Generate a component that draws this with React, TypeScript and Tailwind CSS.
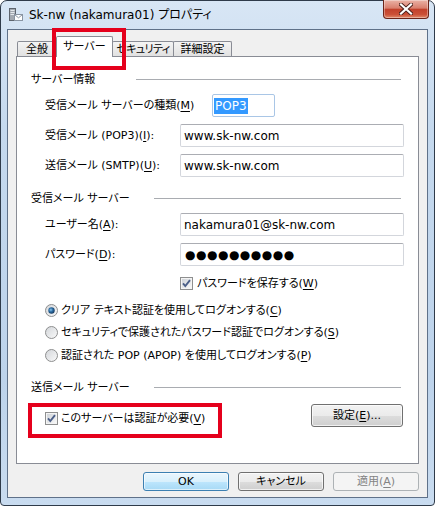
import React from 'react';

const Key = ({ children }: { children: string }) => (
  <span className="underline underline-offset-[2px] decoration-1">{children}</span>
);

const TitleIcon = () => (
  <svg width="16" height="16" viewBox="0 0 16 16" className="ml-[7px] shrink-0">
    <rect x="1.5" y="1.5" width="6" height="12" fill="#a3a9b1" stroke="#5d646d" />
    <rect x="2.5" y="3" width="4" height="1" fill="#e4e8ec" />
    <rect x="2.5" y="5" width="4" height="1" fill="#e4e8ec" />
    <rect x="2.5" y="7" width="4" height="1" fill="#e4e8ec" />
    <rect x="6.5" y="7.5" width="8" height="6" fill="#ffffff" stroke="#8a95a3" />
    <path d="M6.8 7.8 L10.5 10.8 L14.2 7.8" stroke="#8a95a3" fill="none" />
  </svg>
);

const CloseButton = () => (
  <div className="ml-auto mr-[5px] -mt-px self-start w-[46px] h-[19px] rounded-b-[4px] border border-t-0 border-[#6b2419] bg-[linear-gradient(180deg,#eab2a6,#d97f6e_45%,#c2412c_52%,#cb5037_80%,#e0896a)] shadow-[inset_0_0_0_1px_rgba(255,255,255,0.35)] flex items-center justify-center">
    <svg width="14" height="12" viewBox="0 0 14 12">
      <path d="M2 1.5 L12 10.5 M12 1.5 L2 10.5" stroke="#4a1f1a" strokeWidth="4" strokeLinecap="square" />
      <path d="M2 1.5 L12 10.5 M12 1.5 L2 10.5" stroke="#ffffff" strokeWidth="2.2" strokeLinecap="square" />
    </svg>
  </div>
);

const CheckBox = ({ checked }: { checked?: boolean }) => (
  <svg width="13" height="13" viewBox="0 0 13 13" className="shrink-0">
    <defs>
      <linearGradient id="cbFill" x1="0" y1="0" x2="1" y2="1">
        <stop offset="0" stopColor="#cfd3d8" />
        <stop offset="1" stopColor="#f8f8f8" />
      </linearGradient>
    </defs>
    <rect x="0.5" y="0.5" width="12" height="12" fill="#f4f4f4" stroke="#8e8f8f" />
    <rect x="2" y="2" width="9" height="9" fill="url(#cbFill)" />
    {checked && (
      <path d="M3 6.3 L5.3 9 L10 3.2" stroke="#4b5f88" strokeWidth="1.9" fill="none" />
    )}
  </svg>
);

const Radio = ({ checked }: { checked?: boolean }) => (
  <svg width="13" height="13" viewBox="0 0 13 13" className="shrink-0">
    <defs>
      <linearGradient id="rbFill" x1="0" y1="0" x2="1" y2="1">
        <stop offset="0" stopColor="#d2d5d9" />
        <stop offset="1" stopColor="#fafafa" />
      </linearGradient>
      <radialGradient id="rbDot" cx="0.4" cy="0.4" r="0.6">
        <stop offset="0" stopColor="#8cc7ee" />
        <stop offset="0.5" stopColor="#2b6ca3" />
        <stop offset="1" stopColor="#173d63" />
      </radialGradient>
    </defs>
    <circle cx="6.5" cy="6.5" r="6" fill="url(#rbFill)" stroke="#8e8f8f" />
    {checked && <circle cx="6.5" cy="6.5" r="3.2" fill="url(#rbDot)" />}
  </svg>
);

const TextBox = ({ children }: { children: React.ReactNode }) => (
  <div className="w-[224px] h-[23px] rounded-[2px] border border-[#d3d6dc] border-t-[#abadb3] bg-white pl-[3px] flex items-center text-[12px]">
    {children}
  </div>
);

const SectionTitle = ({ label, width }: { label: string; width: string }) => (
  <div className="flex items-center h-[22px] pl-[14px] pr-[17px]">
    <span className={width}>{label}</span>
    <div className="flex-1 h-px bg-[#a9acb1]" />
  </div>
);

const Field = ({ label, children }: { label: React.ReactNode; children: React.ReactNode }) => (
  <div className="flex items-center h-[23px] pl-[28px]">
    <span className="w-[135px]">{label}</span>
    {children}
  </div>
);

const Tab = ({ label, active, tight }: { label: string; active?: boolean; tight?: boolean }) =>
  active ? (
    <div className="relative -ml-px w-[57px] h-[21px] border border-b-0 border-[#898c95] rounded-t-[2px] bg-white flex items-center justify-center pb-[1px] whitespace-nowrap">
      {label}
    </div>
  ) : (
    <div
      className={
        tight
          ? 'mb-px h-[15px] border border-b-0 border-[#898c95] rounded-t-[2px] bg-[linear-gradient(180deg,#f4f4f4,#e1e1e1)] flex items-center justify-center pt-[1px] whitespace-nowrap tracking-[-0.6px]'
          : 'mb-px h-[15px] border border-b-0 border-[#898c95] rounded-t-[2px] bg-[linear-gradient(180deg,#f4f4f4,#e1e1e1)] flex items-center justify-center pt-[1px] whitespace-nowrap'
      }
    >
      {label}
    </div>
  );

const Button = ({ children, kind }: { children: React.ReactNode; kind?: 'default' | 'disabled' }) => {
  if (kind === 'default') {
    return (
      <div className="w-[86px] h-[19px] rounded-[3px] border border-[#3c7fb1] bg-[linear-gradient(180deg,#eaf6fd,#d9f0fc_50%,#bee6fd_50%,#a7d9f5)] shadow-[inset_0_0_0_1px_rgba(255,255,255,0.6)] flex items-center justify-center">
        {children}
      </div>
    );
  }
  if (kind === 'disabled') {
    return (
      <div className="w-[86px] h-[19px] rounded-[3px] border border-[#adb2b5] bg-[#f4f4f4] text-[#838383] flex items-center justify-center">
        {children}
      </div>
    );
  }
  return (
    <div className="w-[86px] h-[19px] rounded-[3px] border border-[#707070] bg-[linear-gradient(180deg,#f2f2f2,#ebebeb_50%,#dddddd_50%,#cfcfcf)] shadow-[inset_0_0_0_1px_rgba(255,255,255,0.7)] flex items-center justify-center">
      {children}
    </div>
  );
};

export default function App() {
  return (
    <div className="relative w-[435px] h-[506px] font-['DejaVu_Sans','Noto_Sans_CJK_JP',sans-serif] [font-feature-settings:'palt'] text-[11px] leading-none text-black">
      <div className="flex flex-col w-full h-full rounded-t-[7px] rounded-b-[4px] border border-[#2f3b4a] bg-[linear-gradient(180deg,#d8e6f5,#c5d9ee_25%,#bdd3eb_75%,#c9dcf0)]">
        {/* title bar */}
        <div className="flex items-center h-[28px]">
          <TitleIcon />
          <span className="ml-[5px] text-[12px]">Sk-nw (nakamura01) プロパティ</span>
          <CloseButton />
        </div>

        {/* client area */}
        <div className="mx-[6px] h-[469px] flex flex-col border border-[#5f7189] bg-[#f0f0f0]">
          <div className="relative z-10 flex items-end h-[27px] pt-[6px] pl-[9px] -mb-px">
            <div className="w-[40px] flex flex-col">
              <Tab label="全般" />
            </div>
            <Tab label="サーバー" active />
            <div className="w-[62px] -ml-px flex flex-col">
              <Tab label="セキュリティ" tight />
            </div>
            <div className="w-[59px] -ml-px flex flex-col">
              <Tab label="詳細設定" />
            </div>
          </div>

          <div className="mx-[8px] h-[408px] border border-[#898c95] bg-white flex flex-col pt-[11px]">
            <SectionTitle label="サーバー情報" width="w-[105px]" />
            <div className="mt-[4px] flex items-center h-[23px] pl-[28px]">
              <span className="w-[167px]">
                受信メール サーバーの種類(<Key>M</Key>)
              </span>
              <div className="w-[63px] h-[23px] rounded-[2px] border border-[#a9c6e6] bg-white pl-[1px] flex items-center text-[12px]">
                <span className="bg-[#3399ff] text-white px-[1px] py-[2px]">POP3</span>
              </div>
            </div>
            <div className="mt-[7px]">
              <Field label={<>受信メール (POP3)(<Key>I</Key>):</>}>
                <TextBox>www.sk-nw.com</TextBox>
              </Field>
            </div>
            <div className="mt-[7px]">
              <Field label={<>送信メール (SMTP)(<Key>U</Key>):</>}>
                <TextBox>www.sk-nw.com</TextBox>
              </Field>
            </div>

            <div className="mt-[10px]">
              <SectionTitle label="受信メール サーバー" width="w-[123px]" />
            </div>
            <div className="mt-[4px]">
              <Field label={<>ユーザー名(<Key>A</Key>):</>}>
                <TextBox>nakamura01@sk-nw.com</TextBox>
              </Field>
            </div>
            <div className="mt-[7px]">
              <Field label={<>パスワード(<Key>D</Key>):</>}>
                <TextBox>
                  <span className="text-[12px] tracking-[0.5px] pl-[1px]">●●●●●●●●●●</span>
                </TextBox>
              </Field>
            </div>
            <div className="mt-[8px] flex items-center h-[18px] pl-[163px] gap-[4px]">
              <CheckBox checked />
              <span>
                パスワードを保存する(<Key>W</Key>)
              </span>
            </div>

            <div className="mt-[9px] flex items-center h-[18px] pl-[28px] gap-[3px]">
              <Radio checked />
              <span>
                クリア テキスト認証を使用してログオンする(<Key>C</Key>)
              </span>
            </div>
            <div className="mt-[4px] flex items-center h-[18px] pl-[28px] gap-[3px]">
              <Radio />
              <span>
                セキュリティで保護されたパスワード認証でログオンする(<Key>S</Key>)
              </span>
            </div>
            <div className="mt-[5px] flex items-center h-[18px] pl-[28px] gap-[3px]">
              <Radio />
              <span>
                認証された POP (APOP) を使用してログオンする(<Key>P</Key>)
              </span>
            </div>

            <div className="mt-[12px]">
              <SectionTitle label="送信メール サーバー" width="w-[123px]" />
            </div>
            <div className="mt-[6px] flex items-center h-[23px] pl-[28px] pr-[15px]">
              <div className="mt-[5px] flex items-center gap-[3px]">
                <CheckBox checked />
                <span>
                  このサーバーは認証が必要(<Key>V</Key>)
                </span>
              </div>
              <div className="ml-auto w-[92px] h-[23px] rounded-[3px] border border-[#707070] bg-[linear-gradient(180deg,#f2f2f2,#ebebeb_50%,#dddddd_50%,#cfcfcf)] shadow-[inset_0_0_0_1px_rgba(255,255,255,0.7)] flex items-center justify-center">
                設定(<Key>E</Key>)...
              </div>
            </div>
          </div>

          <div className="mt-[8px] flex justify-end gap-[9px] pr-[8px]">
            <Button kind="default">OK</Button>
            <Button>キャンセル</Button>
            <Button kind="disabled">
              適用(<Key>A</Key>)
            </Button>
          </div>
        </div>
      </div>

      {/* red callouts */}
      <div className="absolute left-[52px] top-[28px] w-[74px] h-[42px] border-[4px] border-[#e5001c] z-20" />
      <div className="absolute left-[28px] top-[403px] w-[194px] h-[35px] border-[4px] border-[#e5001c] z-20" />
    </div>
  );
}
